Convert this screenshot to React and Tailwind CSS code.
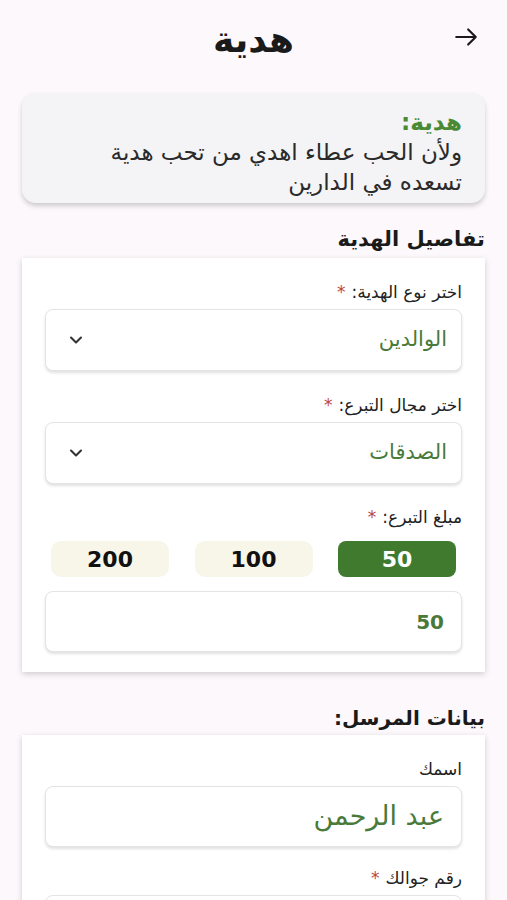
import React from "react";

const font = { fontFamily: '"DejaVu Sans", "Noto Sans", sans-serif' };

function Chevron() {
  return (
    <svg width="20" height="20" viewBox="0 0 24 24" fill="none" stroke="#333" strokeWidth="2.5" strokeLinecap="round" strokeLinejoin="round">
      <path d="M6 9l6 6 6-6" />
    </svg>
  );
}

function Label({ children, req }) {
  return (
    <div className="text-[17px] text-[#222] leading-[24px] mb-[5px]">
      {children}
      {req && <span className="text-[#b9473f] mr-[6px]">*</span>}
    </div>
  );
}

function Select({ value }) {
  return (
    <div className="h-[62px] rounded-[8px] border border-[#e4e4e4] bg-white shadow-[0_2px_3px_rgba(0,0,0,0.12)] flex items-center justify-between pr-[14px] pl-[20px]">
      <span className="text-[21px] text-[#4a7a3a]">{value}</span>
      <Chevron />
    </div>
  );
}

export default function App() {
  return (
    <div dir="rtl" style={font} className="w-[507px] h-[900px] overflow-hidden bg-[#fcf8fc] text-[#1a1a1a]">
      {/* header */}
      <div className="relative h-[80px] flex items-center justify-center">
        <h1 className="text-[36px] font-bold text-[#1a1a1a] leading-[40px]">هدية</h1>
        <svg className="absolute right-[28px] top-[24px]" width="26" height="26" viewBox="0 0 24 24" fill="none" stroke="#1a1a1a" strokeWidth="2" strokeLinecap="round" strokeLinejoin="round">
          <path d="M3 12h18M14 5l7 7-7 7" />
        </svg>
      </div>

      {/* info card */}
      <div className="mx-[22px] mt-[13px] rounded-[14px] bg-[#f4f3f5] shadow-[0_3px_5px_rgba(0,0,0,0.18)] pr-[23px] pl-[12px] pt-[14px] pb-[6px]">
        <div className="text-[23px] font-bold text-[#4a8a35] leading-[30px]">هدية:</div>
        <div className="text-[23px] text-[#2a2a2a] leading-[30px] whitespace-nowrap">ولأن الحب عطاء اهدي من تحب هدية</div>
        <div className="text-[23px] text-[#2a2a2a] leading-[30px]">تسعده في الدارين</div>
      </div>

      {/* gift details */}
      <div className="mx-[22px] mt-[23px] text-[21px] font-bold leading-[26px]">تفاصيل الهدية</div>
      <div className="mx-[22px] mt-[6px] bg-white shadow-[0_2px_6px_rgba(0,0,0,0.18)] px-[23px] pt-[22px] pb-[20px]">
        <Label req>اختر نوع الهدية:</Label>
        <Select value="الوالدين" />
        <div className="h-[22px]" />
        <Label req>اختر مجال التبرع:</Label>
        <Select value="الصدقات" />
        <div className="h-[21px]" />
        <Label req>مبلغ التبرع:</Label>
        <div className="flex justify-between px-[6px] mt-[12px]">
          <div className="w-[118px] h-[36px] rounded-[8px] bg-[#3f7a2f] text-white font-bold text-[22px] flex items-center justify-center">50</div>
          <div className="w-[118px] h-[36px] rounded-[10px] bg-[#f8f5e9] text-[#111] font-bold text-[22px] flex items-center justify-center">100</div>
          <div className="w-[118px] h-[36px] rounded-[10px] bg-[#f8f5e9] text-[#111] font-bold text-[22px] flex items-center justify-center">200</div>
        </div>
        <div className="mt-[14px] h-[61px] rounded-[8px] border border-[#e4e4e4] bg-white shadow-[0_2px_3px_rgba(0,0,0,0.12)] flex items-center pr-[17px]">
          <span className="text-[20px] font-bold text-[#4a7a3a]">50</span>
        </div>
      </div>

      {/* sender */}
      <div className="mx-[22px] mt-[33px] text-[20px] font-bold leading-[26px]">بيانات المرسل:</div>
      <div className="mx-[22px] mt-[4px] bg-white shadow-[0_2px_6px_rgba(0,0,0,0.18)] px-[23px] pt-[22px] pb-[20px]">
        <Label>اسمك</Label>
        <div className="h-[61px] rounded-[8px] border border-[#e4e4e4] bg-white shadow-[0_2px_3px_rgba(0,0,0,0.12)] flex items-center pr-[17px]">
          <span className="text-[27px] text-[#4a7a3a]">عبد الرحمن</span>
        </div>
        <div className="h-[19px]" />
        <Label req>رقم جوالك</Label>
        <div className="h-[61px] rounded-[8px] border border-[#e4e4e4] bg-white shadow-[0_2px_3px_rgba(0,0,0,0.12)]" />
      </div>
    </div>
  );
}
